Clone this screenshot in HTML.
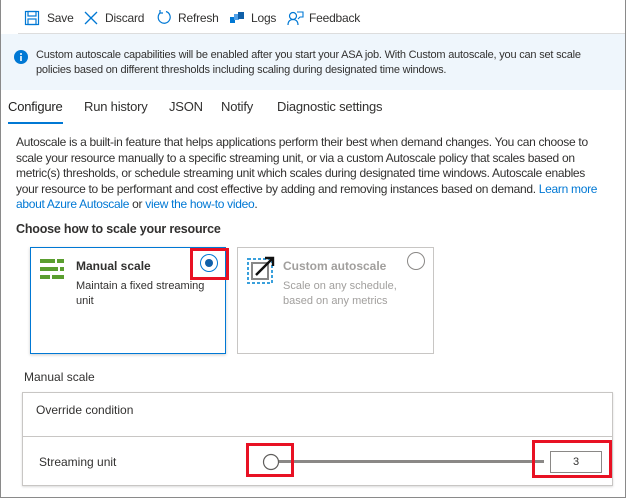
<!DOCTYPE html>
<html><head><style>
*{margin:0;padding:0;box-sizing:border-box}
body{width:626px;height:498px;background:#fff;font-family:"Liberation Sans",sans-serif;color:#323130;position:relative;overflow:hidden;font-size:12px}
.frame{position:absolute;left:0;top:0;width:626px;height:498px;border:1px solid #8a8a8a;border-top:none}
.abs{position:absolute;white-space:nowrap}
.tb{top:11px;font-size:12px;letter-spacing:-0.2px}
.info{position:absolute;left:1px;top:34px;width:624px;height:56px;background:#eff6fc}
.tabs span{position:absolute;top:99px;font-size:13px;letter-spacing:-0.2px}
.p{position:absolute;left:16px;top:135px;font-size:12px;line-height:15.6px;letter-spacing:-0.3px;white-space:nowrap}
a{color:#0078d4;text-decoration:none}
.card{position:absolute;top:247px;height:107px;border:1px solid #c8c6c4;background:#fff}
.red{position:absolute;border:3px solid #e81123}
</style></head><body>
<div class="frame"></div>
<svg class="abs" style="left:24px;top:10px" width="16" height="16" viewBox="0 0 16 16"><rect x="1.5" y="1.5" width="13" height="13" fill="none" stroke="#0078d4" stroke-width="1.2"/><rect x="4" y="1.5" width="8" height="4.5" fill="none" stroke="#0078d4" stroke-width="1.2"/><rect x="4" y="9" width="8" height="5.5" fill="none" stroke="#0078d4" stroke-width="1.2"/></svg>
<span class="abs tb" style="left:47px">Save</span>
<svg class="abs" style="left:83px;top:10px" width="16" height="16" viewBox="0 0 16 16"><path d="M2 2L14 14M14 2L2 14" stroke="#0078d4" stroke-width="1.3"/></svg>
<span class="abs tb" style="left:105px">Discard</span>
<svg class="abs" style="left:156px;top:9px" width="16" height="16" viewBox="0 0 16 16"><path d="M10 2.5A6 6 0 1 1 4.5 3.5" fill="none" stroke="#0078d4" stroke-width="1.2"/><path d="M4 1v3h3" fill="none" stroke="#0078d4" stroke-width="1.2"/></svg>
<span class="abs tb" style="left:178px">Refresh</span>
<svg class="abs" style="left:229px;top:10px" width="16" height="16" viewBox="0 0 16 16"><rect x="1" y="7" width="5" height="6" fill="#0078d4"/><rect x="5" y="4" width="5" height="6" fill="#50a0e8"/><rect x="9" y="2" width="6" height="7" fill="#0f5fa8"/></svg>
<span class="abs tb" style="left:251px">Logs</span>
<svg class="abs" style="left:287px;top:10px" width="17" height="16" viewBox="0 0 17 16"><circle cx="6" cy="6" r="3.5" fill="none" stroke="#0078d4" stroke-width="1.2"/><path d="M1 15c0-4 2.5-5.5 5-5.5s5 1.5 5 5.5" fill="none" stroke="#0078d4" stroke-width="1.2"/><path d="M10 2h6v5h-3l-2 2" fill="none" stroke="#0078d4" stroke-width="1.1"/></svg>
<span class="abs tb" style="left:309px">Feedback</span>
<div class="abs" style="left:18px;top:33px;width:607px;height:1px;background:#ddd"></div>
<div class="info"></div>
<svg class="abs" style="left:14px;top:50px" width="14" height="14" viewBox="0 0 14 14"><circle cx="7" cy="7" r="7" fill="#0078d4"/><rect x="6.2" y="6" width="1.6" height="5" fill="#fff"/><circle cx="7" cy="4" r="1" fill="#fff"/></svg>
<div class="abs" style="left:36px;top:48px;font-size:11px;line-height:15px;letter-spacing:-0.2px">Custom autoscale capabilities will be enabled after you start your ASA job. With Custom autoscale, you can set scale<br>policies based on different thresholds including scaling during designated time windows.</div>
<div class="tabs"><span style="left:8px;color:#201f1e">Configure</span><span style="left:84px">Run history</span><span style="left:169px">JSON</span><span style="left:221px">Notify</span><span style="left:277px">Diagnostic settings</span></div>
<div class="abs" style="left:8px;top:122px;width:55px;height:2px;background:#0078d4"></div>
<div class="p">Autoscale is a built-in feature that helps applications perform their best when demand changes. You can choose to<br>scale your resource manually to a specific streaming unit, or via a custom Autoscale policy that scales based on<br>metric(s) thresholds, or schedule streaming unit which scales during designated time windows. Autoscale enables<br>your resource to be performant and cost effective by adding and removing instances based on demand. <a>Learn more</a><br><a>about Azure Autoscale</a> or <a>view the how-to video</a>.</div>
<div class="abs" style="left:16px;top:222px;font-weight:bold;font-size:12.5px;letter-spacing:-0.2px">Choose how to scale your resource</div>
<div class="card" style="left:30px;width:196px;border-color:#0078d4;box-shadow:0 1px 3px rgba(0,0,0,.2)"></div>
<div class="card" style="left:237px;width:197px"></div>
<svg class="abs" style="left:40px;top:259px" width="24" height="21" viewBox="0 0 24 21"><g fill="#5a9e2f"><rect x="0" y="0" width="15" height="4"/><rect x="17" y="0" width="7" height="4"/><rect x="0" y="8" width="18" height="4"/><rect x="20" y="8" width="4" height="4"/><rect x="0" y="16" width="10" height="4"/><rect x="12" y="16" width="12" height="4"/></g></svg>
<div class="abs" style="left:76px;top:259px;font-weight:bold;font-size:12px">Manual scale</div>
<div class="abs" style="left:76px;top:279px;font-size:11px;line-height:15px;color:#323130">Maintain a fixed streaming<br>unit</div>
<svg class="abs" style="left:199px;top:253px" width="20" height="20" viewBox="0 0 20 20"><circle cx="10" cy="10" r="8.5" fill="#fff" stroke="#0078d4" stroke-width="1"/><circle cx="10" cy="10" r="4" fill="#0f5fa8"/></svg>
<div class="red" style="left:190px;top:248px;width:39px;height:32px"></div>
<svg class="abs" style="left:247px;top:256px" width="28" height="28" viewBox="0 0 28 28"><rect x="1" y="3" width="24" height="24" fill="none" stroke="#3aa0dc" stroke-width="2" stroke-dasharray="3 2"/><rect x="5" y="7" width="16" height="16" fill="#fff" stroke="#888" stroke-width="2"/><path d="M9 19L26 2M18 2h8v8" fill="none" stroke="#111" stroke-width="2.4"/></svg>
<div class="abs" style="left:283px;top:259px;font-weight:bold;font-size:12px;color:#a19f9d">Custom autoscale</div>
<div class="abs" style="left:283px;top:279px;font-size:11px;line-height:15px;color:#a19f9d">Scale on any schedule,<br>based on any metrics</div>
<svg class="abs" style="left:406px;top:251px" width="20" height="20" viewBox="0 0 20 20"><circle cx="10" cy="10" r="8.5" fill="#fff" stroke="#8a8886" stroke-width="1"/></svg>
<div class="abs" style="left:24px;top:370px;font-size:12px">Manual scale</div>
<div class="abs" style="left:22px;top:392px;width:591px;height:94px;border:1px solid #c8c6c4;box-shadow:0 1px 2px rgba(0,0,0,.15)"></div>
<div class="abs" style="left:22px;top:436px;width:591px;height:1px;background:#c8c6c4"></div>
<div class="abs" style="left:36px;top:403px;font-size:12px">Override condition</div>
<div class="abs" style="left:39px;top:455px;font-size:12px">Streaming unit</div>
<div class="abs" style="left:276px;top:460px;width:268px;height:3px;background:#8a8886"></div>
<svg class="abs" style="left:262px;top:453px" width="18" height="18" viewBox="0 0 18 18"><circle cx="9" cy="9" r="7.5" fill="#fff" stroke="#605e5c" stroke-width="1.2"/></svg>
<div class="abs" style="left:550px;top:451px;width:52px;height:22px;border:1px solid #8a8886;text-align:center;line-height:20px;font-size:11px">3</div>
<div class="red" style="left:246px;top:443px;width:48px;height:34px"></div>
<div class="red" style="left:532px;top:440px;width:80px;height:38px"></div>
</body></html>
